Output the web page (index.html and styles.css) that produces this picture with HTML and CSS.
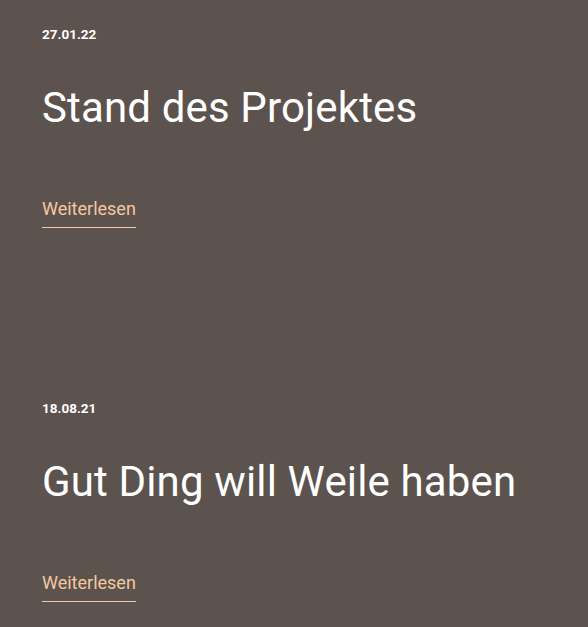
FILE: index.html
```html
<html>
	<head>
		<title>Neuigkeiten</title>
		<link rel="stylesheet" href="styles.css">
	</head>
	<body>
		<div id="news">
			<div class="post">
				<div class="postDate">27.01.22</div>
				<h2 class="postTitle">Stand des Projektes</h2>
				<a class="postLink" href="#">Weiterlesen</a>
			</div>
			<div class="post">
				<div class="postDate">18.08.21</div>
				<h2 class="postTitle">Gut Ding will Weile haben</h2>
				<a class="postLink" href="#">Weiterlesen</a>
			</div>
		</div>
	</body>
</html>
```
FILE: styles.css
```css
body {
	margin:0;
	--background-color: #5c524e;
	--accent-color: #f4c8a0;

	background-color:var(--background-color);
	color:#ffffff;
	font-family: Roboto, "Liberation Sans", sans-serif;
}

#news {
	display:flex;
	flex-direction:column;
	gap:172px;
	padding:26px 42px;
}

.post {
	display:flex;
	flex-direction:column;
	align-items:flex-start;
}

.postDate {
	font-size:13.5px;
	line-height:16px;
	font-weight:bold;
}

.postTitle {
	margin:41px 0 0 0;
	font-size:42px;
	line-height:50px;
	font-weight:normal;
	letter-spacing:0.15px;
}

.postLink {
	margin-top:66px;
	padding-bottom:8px;
	font-size:18px;
	line-height:20px;
	color:var(--accent-color);
	text-decoration:none;
	border-bottom:1px solid var(--accent-color);
}
```
